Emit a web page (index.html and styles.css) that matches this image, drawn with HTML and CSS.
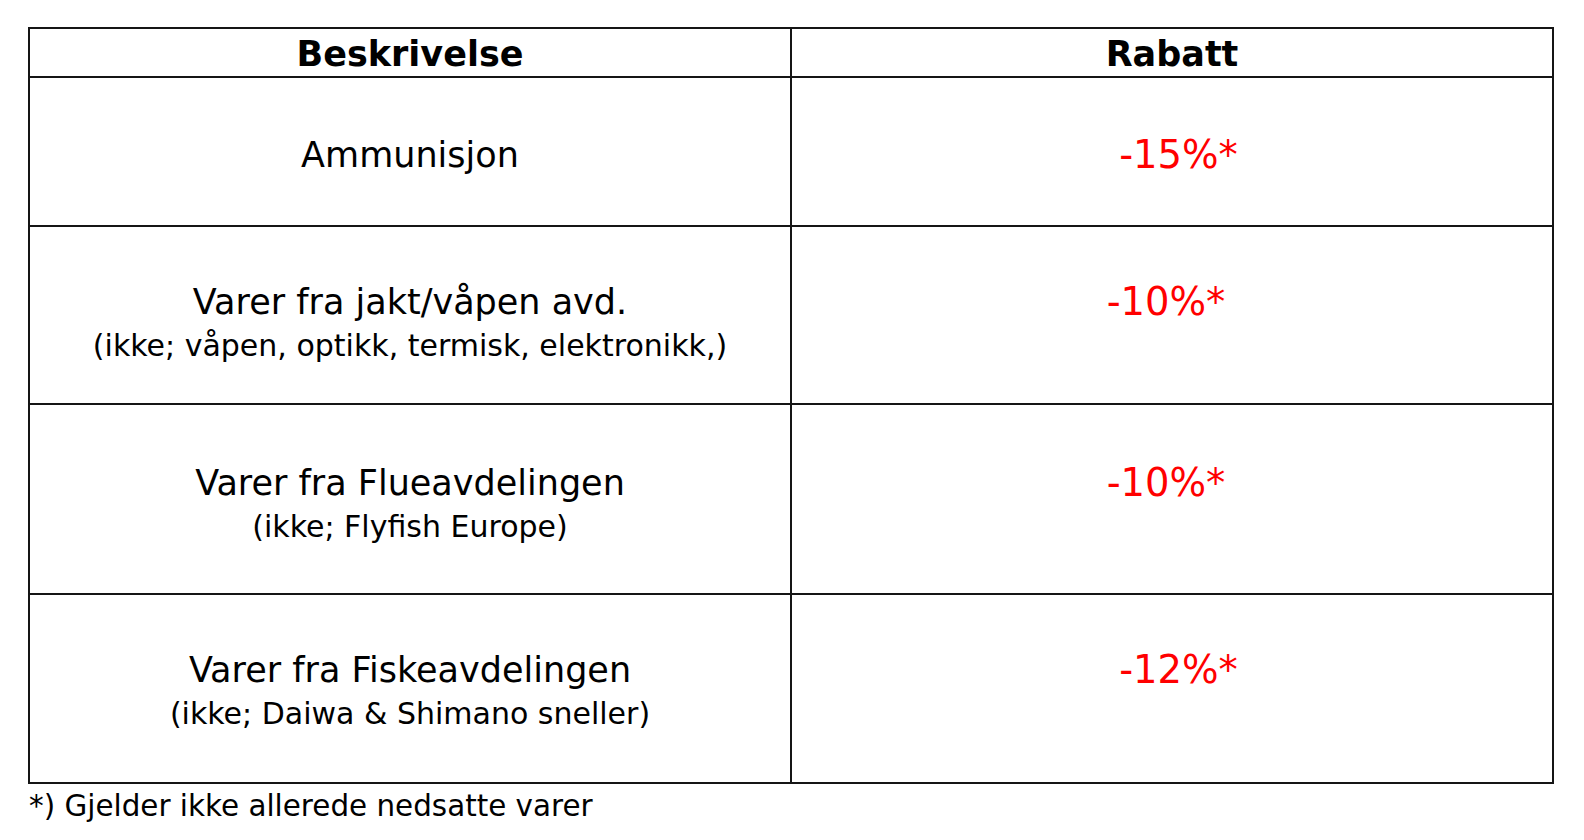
FILE: index.html
```html
<!DOCTYPE html>
<html lang="no">
<head>
<meta charset="utf-8">
<title>Rabatter</title>
<link rel="stylesheet" href="styles.css">
</head>
<body>
<div class="page">
  <div class="table">
    <div class="cell head">Beskrivelse</div>
    <div class="cell head">Rabatt</div>

    <div class="cell body r1"><div class="main">Ammunisjon</div></div>
    <div class="cell body r1"><div class="price shift-right">-15%*</div></div>

    <div class="cell body r2"><div class="main">Varer fra jakt/våpen avd.</div><div class="sub">(ikke; våpen, optikk, termisk, elektronikk,)</div></div>
    <div class="cell body r2"><div class="price shift-left">-10%*</div></div>

    <div class="cell body r3"><div class="main">Varer fra Flueavdelingen</div><div class="sub">(ikke; Flyfish Europe)</div></div>
    <div class="cell body r3"><div class="price shift-left">-10%*</div></div>

    <div class="cell body r4"><div class="main">Varer fra Fiskeavdelingen</div><div class="sub">(ikke; Daiwa &amp; Shimano sneller)</div></div>
    <div class="cell body r4"><div class="price shift-right">-12%*</div></div>
  </div>
  <p class="note">*) Gjelder ikke allerede nedsatte varer</p>
</div>
</body>
</html>
```

FILE: styles.css
```css
html, body {
  margin: 0;
  padding: 0;
  background: #ffffff;
}

body {
  font-family: "DejaVu Sans", "Liberation Sans", sans-serif;
  color: #000000;
}

.page {
  padding: 27px 0 0 28px;
}

.table {
  display: grid;
  grid-template-columns: 762px 762px;
  grid-template-rows: 49px 149px 178px 190px 189px;
  width: max-content;
  border-top: 2px solid #151515;
  border-left: 2px solid #151515;
}

.cell {
  box-sizing: border-box;
  border-right: 2px solid #151515;
  border-bottom: 2px solid #151515;
  text-align: center;
}

.head {
  font-weight: bold;
  font-size: 35px;
  line-height: 40px;
  padding-top: 5px;
}

.r1 { padding-top: 57px; }
.r2 { padding-top: 55px; }
.r3 { padding-top: 58px; }
.r4 { padding-top: 55px; }

.main {
  font-size: 35px;
  line-height: 40px;
}

.sub {
  font-size: 30px;
  line-height: 48px;
}

.price {
  font-size: 38.5px;
  line-height: 40px;
  color: #ff0000;
}

.shift-right { padding-left: 13px; }
.shift-left { padding-right: 12px; }

.note {
  margin: 4px 0 0 1px;
  font-size: 29.4px;
  line-height: 36px;
}
```
